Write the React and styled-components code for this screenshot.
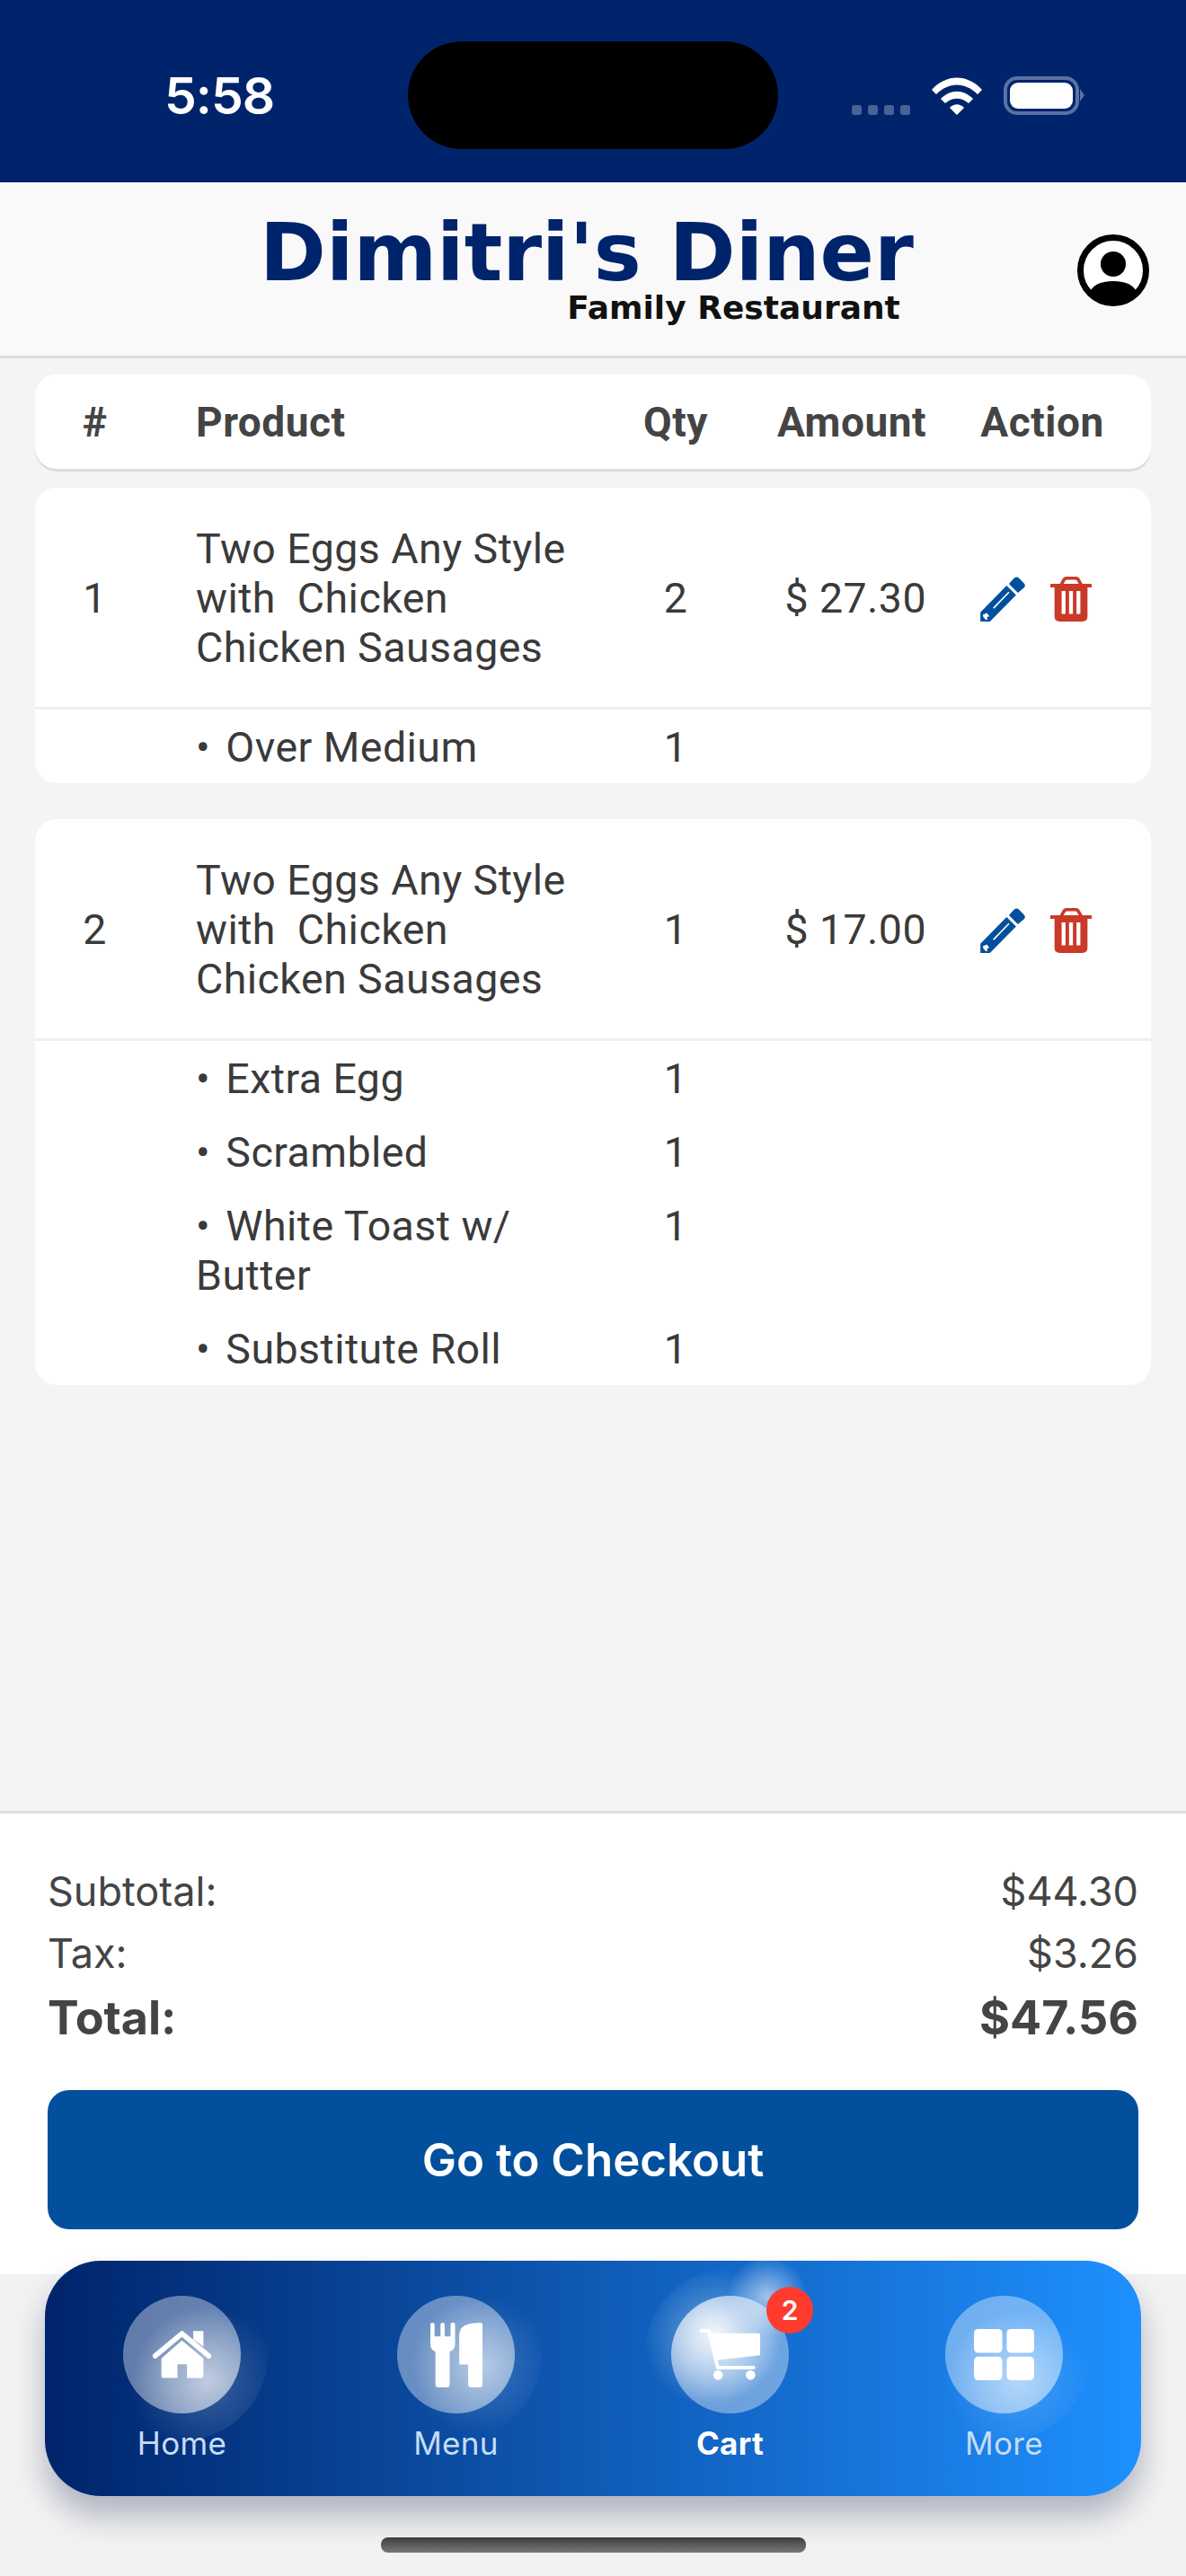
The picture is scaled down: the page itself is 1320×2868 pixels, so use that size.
import React from "react";
import styled, { createGlobalStyle } from "styled-components";

const Global = createGlobalStyle`
  html, body { margin: 0; padding: 0; background: #f4f4f4; }
  * { box-sizing: border-box; }
`;

const Page = styled.div`
  position: relative;
  width: 1320px;
  height: 2868px;
  overflow: hidden;
  display: flex;
  flex-direction: column;
  background: #f4f4f4;
  font-family: "Roboto", "Liberation Sans", sans-serif;
`;

/* status bar */
const StatusBar = styled.div`
  position: relative;
  height: 203px;
  flex: none;
  background: #00246b;
  display: flex;
  justify-content: space-between;
  padding: 74px 113px 0 183px;
`;
const Time = styled.div`
  font-family: "Inter", "Liberation Sans", sans-serif;
  font-weight: 600;
  font-size: 57px;
  line-height: 66px;
  letter-spacing: -1px;
  color: #fff;
`;
const Island = styled.div`
  position: absolute;
  left: 454px;
  top: 46px;
  width: 412px;
  height: 120px;
  border-radius: 60px;
  background: #000;
`;
const StatusIcons = styled.div`
  display: flex;
  align-items: flex-end;
  height: 54px;
`;
const Dots = styled.div`
  display: flex;
  gap: 7px;
  margin-right: 24px;
`;
const Dot = styled.span`
  width: 11px;
  height: 11px;
  border-radius: 3px;
  background: #4a6296;
`;
const Battery = styled.div`
  position: relative;
  width: 84px;
  height: 43px;
  margin-left: 24px;
  margin-right: 6px;
  padding: 3px;
  border: 4px solid #5a72a4;
  border-radius: 15px;
  &::before {
    content: "";
    display: block;
    height: 100%;
    background: #fff;
    border-radius: 9px;
  }
  &::after {
    content: "";
    position: absolute;
    right: -10px;
    top: 10px;
    width: 0;
    height: 0;
    border-left: 5px solid #5a72a4;
    border-top: 7px solid transparent;
    border-bottom: 7px solid transparent;
  }
`;

/* header */
const Header = styled.header`
  height: 196px;
  flex: none;
  background: #f9f9f9;
  border-bottom: 3px solid #dedede;
  display: flex;
  align-items: flex-start;
  padding: 35px 41px 0 289px;
`;
const Logo = styled.div`
  display: flex;
  flex-direction: column;
  align-items: flex-end;
  font-family: "DejaVu Sans", sans-serif;
  font-weight: 700;
`;
const LogoTitle = styled.div`
  font-size: 89px;
  line-height: 86px;
  color: #00246b;
  white-space: nowrap;
`;
const LogoSub = styled.div`
  font-size: 36px;
  line-height: 38px;
  margin-right: 15px;
  color: #111;
  white-space: nowrap;
`;
const Avatar = styled.svg`
  width: 80px;
  height: 80px;
  margin-left: auto;
  margin-top: 23px;
`;

/* table */
const Content = styled.main`
  flex: 1;
  display: flex;
  flex-direction: column;
  padding: 18px 39px 0;
`;
const Cols = styled.div`
  display: grid;
  grid-template-columns: 133px 529px 102px 228px 250px;
`;
const HeadRow = styled(Cols)`
  height: 105px;
  align-items: center;
  background: #fff;
  border-radius: 24px;
  box-shadow: 0 3px 0 #dddddd;
  font-weight: 700;
  font-size: 46px;
  letter-spacing: 0.5px;
  color: #444;
  margin-bottom: 21px;
`;
const Card = styled.section`
  background: #fff;
  border-radius: 24px;
  margin-bottom: 40px;
`;
const MainRow = styled(Cols)`
  align-items: center;
  padding: 41px 0 38px;
  border-bottom: 3px solid #efefef;
  font-size: 46.5px;
  letter-spacing: 0.45px;
  line-height: 55px;
  color: #3a3a3a;
`;
const SubList = styled.div`
  display: flex;
  flex-direction: column;
  gap: 27px;
  padding: 15px 0 12px;
`;
const SubRow = styled(Cols)`
  font-size: 46.5px;
  letter-spacing: 0.45px;
  line-height: 55px;
  color: #3a3a3a;
`;
const Num = styled.div`
  text-align: center;
`;
const Prod = styled.div`
  padding: 0 52px 0 46px;
`;
const Qty = styled.div`
  text-align: center;
`;
const Amt = styled.div`
  text-align: right;
`;
const ActionHead = styled.div`
  text-align: center;
  padding-left: 8px;
`;
const Actions = styled.div`
  display: flex;
  justify-content: center;
  align-items: center;
  gap: 28px;
  padding-right: 6px;
`;

/* footer */
const Footer = styled.footer`
  flex: none;
  height: 516px;
  background: #fff;
  border-top: 3px solid #dedede;
  padding: 52px 53px 0;
  color: #444;
  font-family: "Inter", "Liberation Sans", sans-serif;
`;
const SumRow = styled.div`
  display: flex;
  justify-content: space-between;
  font-size: ${(p) => (p.$total ? "52px" : "45px")};
  font-weight: ${(p) => (p.$total ? 700 : 400)};
  line-height: ${(p) => (p.$total ? "76px" : "69px")};
`;
const Checkout = styled.button`
  display: block;
  width: 100%;
  height: 155px;
  margin-top: 42px;
  border: 0;
  border-radius: 24px;
  background: #02509d;
  color: #fff;
  font-family: inherit;
  font-weight: 600;
  font-size: 51px;
`;

/* bottom */
const Bottom = styled.div`
  flex: none;
  height: 336px;
  background: #f2f2f2;
  display: flex;
  justify-content: center;
  align-items: flex-end;
  padding-bottom: 26px;
`;
const HomeBar = styled.div`
  width: 473px;
  height: 17px;
  border-radius: 8px;
  background: linear-gradient(180deg, #3f3f3f, #787878);
`;
const Nav = styled.nav`
  position: absolute;
  left: 50px;
  top: 2517px;
  width: 1220px;
  height: 262px;
  border-radius: 62px;
  background: linear-gradient(90deg, #00246b 0%, #1e90ff 100%);
  box-shadow: 0 22px 34px rgba(0, 20, 70, 0.28);
  display: grid;
  grid-template-columns: repeat(4, 1fr);
  padding-top: 39px;
`;
const NavItem = styled.div`
  display: flex;
  flex-direction: column;
  align-items: center;
  font-family: "Inter", "Liberation Sans", sans-serif;
`;
const Bubble = styled.div`
  position: relative;
  width: 131px;
  height: 131px;
  border-radius: 50%;
  display: flex;
  align-items: center;
  justify-content: center;
  background: radial-gradient(
    circle at ${(p) => p.$glow},
    rgba(255, 255, 255, ${(p) => p.$power}) 0%,
    rgba(255, 255, 255, 0.38) 62%,
    rgba(255, 255, 255, 0.38) 100%
  );
  &::before {
    content: "";
    position: absolute;
    inset: -30px;
    border-radius: 50%;
    background: radial-gradient(
      circle at ${(p) => p.$halo},
      rgba(255, 255, 255, ${(p) => p.$haloPower}) 0%,
      rgba(255, 255, 255, 0) 48%
    );
    pointer-events: none;
  }
  svg {
    position: relative;
    display: block;
  }
`;
const Badge = styled.span`
  position: absolute;
  left: 106px;
  top: -10px;
  width: 52px;
  height: 52px;
  border-radius: 50%;
  background: #ff3b30;
  color: #fff;
  font-size: 30px;
  font-weight: 600;
  line-height: 52px;
  text-align: center;
`;
const CartGlow = styled.span`
  position: absolute;
  left: 62px;
  top: -44px;
  width: 90px;
  height: 90px;
  border-radius: 50%;
  background: radial-gradient(circle, rgba(255, 255, 255, 0.6) 0%, rgba(255, 255, 255, 0) 70%);
`;
const NavLabel = styled.div`
  margin-top: 13px;
  font-size: 35px;
  letter-spacing: 0.3px;
  line-height: 40px;
  font-weight: ${(p) => (p.$active ? 700 : 400)};
  color: ${(p) => (p.$active ? "#fff" : "#c6dcf8")};
`;

const Pencil = () => (
  <svg width="50" height="50" viewBox="0 0 150 151">
    <path fill="#02509d" d="M0 120 88 30l32 32-88 89H0z" />
    <path fill="#02509d" d="M96 24l17-19q9-7 17 0l16 17q8 8 0 16l-20 16z" />
    <path stroke="#fff" strokeWidth="5" d="M44 106 96 52" />
    <path fill="#fff" d="M8 128l14-6 8 12-8 2 2 8-6 1-8-9z" />
  </svg>
);
const Trash = () => (
  <svg width="46" height="50" viewBox="0 0 139 151">
    <path fill="none" stroke="#c93a28" strokeWidth="11" d="M36 28 46 10Q49 5 56 5H84Q91 5 94 10L104 28" />
    <path fill="#c93a28" d="M2 24H137Q139 24 139 27V36H0V27Q0 24 2 24Z" />
    <path fill="#c93a28" d="M14 36H125V133Q125 151 107 151H32Q14 151 14 133Z" />
    <path fill="#fff" d="M38 48h13v77H38zM63 48h13v77H63zM88 48h13v77H88z" />
  </svg>
);
const HomeIcon = () => (
  <svg width="65" height="53" viewBox="0 0 196 159">
    <path fill="#fff" d="M136 0h34v52l-34-24z" />
    <path fill="none" stroke="#fff" strokeWidth="17" strokeLinecap="round" d="M8 84 98 9l90 75" />
    <path fill="#fff" d="M98 32l72 60v60q0 6-6 6h-49v-46H83v46H35q-6 0-6-6V92z" />
  </svg>
);
const MenuIcon = () => (
  <svg width="58" height="72" viewBox="0 0 175 217">
    <path fill="#fff" d="M0 5a7 5 0 0 1 14 0V46H34V5a7 5 0 0 1 14 0V46H68V5a7 5 0 0 1 15 0V70Q83 92 65 97V207Q65 217 55 217H28Q17 217 17 207V97Q0 92 0 70Z" />
    <path fill="#fff" d="M97 140V45Q97 15 118 8 135 0 170 0 175 0 175 5V207Q175 217 165 217H137Q127 217 127 207V140Z" />
  </svg>
);
const CartIcon = () => (
  <svg width="67" height="57" viewBox="0 0 202 172">
    <path fill="none" stroke="#fff" strokeWidth="12" strokeLinecap="round" strokeLinejoin="round" d="M6 6H30L60 130H180" />
    <path fill="#fff" d="M36 14H196q6 0 6 6V88L58 104Z" />
    <circle cx="61" cy="155" r="16" fill="#fff" />
    <circle cx="170" cy="155" r="16" fill="#fff" />
  </svg>
);
const GridIcon = () => (
  <svg width="67" height="57" viewBox="0 0 202 172">
    <rect x="0" y="0" width="95" height="80" rx="14" fill="#fff" />
    <rect x="110" y="0" width="92" height="80" rx="14" fill="#fff" />
    <rect x="0" y="93" width="95" height="79" rx="14" fill="#fff" />
    <rect x="110" y="93" width="92" height="79" rx="14" fill="#fff" />
  </svg>
);

const items = [
  {
    n: 1, qty: 2, amt: "$ 27.30",
    subs: [["Over Medium", 1]],
  },
  {
    n: 2, qty: 1, amt: "$ 17.00",
    subs: [
      ["Extra Egg", 1],
      ["Scrambled", 1],
      ["White Toast w/ Butter", 1],
      ["Substitute Roll", 1],
    ],
  },
];

const navs = [
  { label: "Home", Icon: HomeIcon, glow: "72% 72%", halo: "64% 66%", power: 0.68, haloPower: 0.22 },
  { label: "Menu", Icon: MenuIcon, glow: "72% 60%", halo: "64% 56%", power: 0.62, haloPower: 0.22 },
  { label: "Cart", Icon: CartIcon, glow: "36% 32%", halo: "40% 40%", power: 0.9, haloPower: 0.4, active: true, badge: 2 },
  { label: "More", Icon: GridIcon, glow: "62% 72%", halo: "58% 66%", power: 0.6, haloPower: 0.18 },
];

export default function App() {
  return (
    <Page>
      <Global />
      <StatusBar>
        <Time>5:58</Time>
        <Island />
        <StatusIcons>
          <Dots>
            <Dot /><Dot /><Dot /><Dot />
          </Dots>
          <svg width="56" height="42" viewBox="0 0 56 42">
            <path fill="#fff" d="M0 14C16-4 40-4 56 14L51 19C37 5 19 5 5 19Z" />
            <path fill="#fff" d="M10 24C21 13 35 13 46 24L41 29C33 22 23 22 15 29Z" />
            <path fill="#fff" d="M20 34C25 29 31 29 36 34L28 42Z" />
          </svg>
          <Battery />
        </StatusIcons>
      </StatusBar>
      <Header>
        <Logo>
          <LogoTitle>Dimitri's Diner</LogoTitle>
          <LogoSub>Family Restaurant</LogoSub>
        </Logo>
        <Avatar viewBox="0 0 80 80">
          <circle cx="40" cy="40" r="36.5" fill="#fff" stroke="#000" strokeWidth="7" />
          <circle cx="40" cy="33" r="14" fill="#000" />
          <path fill="#000" d="M13 66Q18 52 40 52T67 66Q55 77 40 77T13 66Z" />
        </Avatar>
      </Header>
      <Content>
        <HeadRow>
          <Num>#</Num>
          <Prod>Product</Prod>
          <Qty>Qty</Qty>
          <Amt>Amount</Amt>
          <ActionHead>Action</ActionHead>
        </HeadRow>
        {items.map((it) => (
          <Card key={it.n}>
            <MainRow>
              <Num>{it.n}</Num>
              <Prod>Two Eggs Any Style with&nbsp; Chicken Chicken Sausages</Prod>
              <Qty>{it.qty}</Qty>
              <Amt>{it.amt}</Amt>
              <Actions>
                <Pencil />
                <Trash />
              </Actions>
            </MainRow>
            <SubList>
              {it.subs.map(([t, q]) => (
                <SubRow key={t}>
                  <div />
                  <Prod>{`•\u200A ${t}`}</Prod>
                  <Qty>{q}</Qty>
                </SubRow>
              ))}
            </SubList>
          </Card>
        ))}
      </Content>
      <Footer>
        <SumRow><span>Subtotal:</span><span>$44.30</span></SumRow>
        <SumRow><span>Tax:</span><span>$3.26</span></SumRow>
        <SumRow $total><span>Total:</span><span>$47.56</span></SumRow>
        <Checkout>Go to Checkout</Checkout>
      </Footer>
      <Bottom>
        <HomeBar />
      </Bottom>
      <Nav>
        {navs.map(({ label, Icon, glow, halo, power, haloPower, active, badge }) => (
          <NavItem key={label}>
            <Bubble $glow={glow} $halo={halo} $power={power} $haloPower={haloPower}>
              <Icon />
              {badge && <CartGlow />}
              {badge && <Badge>{badge}</Badge>}
            </Bubble>
            <NavLabel $active={active}>{label}</NavLabel>
          </NavItem>
        ))}
      </Nav>
    </Page>
  );
}
